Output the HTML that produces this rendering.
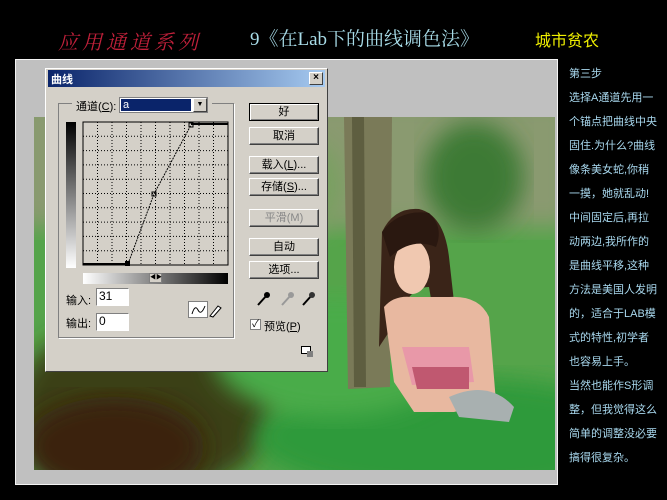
<!DOCTYPE html>
<html><head><meta charset="utf-8"><style>
*{margin:0;padding:0;box-sizing:border-box}
body{width:667px;height:500px;background:#000;position:relative;overflow:hidden;font-family:"Liberation Sans","Noto Sans CJK SC",sans-serif}
.a{position:absolute}
.t{font-family:"Liberation Serif","Noto Serif CJK SC",serif}
.btn{position:absolute;left:249px;width:70px;height:18px;background:#d4d0c8;border:1px solid;border-color:#fff #404040 #404040 #fff;box-shadow:inset -1px -1px 0 #808080;font-size:11px;text-align:center;line-height:16px;color:#000}
.side{position:absolute;left:569px;font-size:11px;color:#a8d8ee;white-space:nowrap}
</style></head><body>
<div class="a t" style="left:58px;top:26px;font-size:20px;color:#c0203a;font-style:italic;letter-spacing:4px">应用通道系列</div>
<div class="a t" style="left:250px;top:24px;font-size:19px;color:#a8dce8">9《在Lab下的曲线调色法》</div>
<div class="a" style="left:535px;top:27px;font-size:16px;color:#f0f000">城市贫农</div>

<div class="a" style="left:15px;top:59px;width:543px;height:426px;background:#c0c0c0;border:1px solid #f4f4f4"></div>
<div class="a" style="left:34px;top:117px;width:521px;height:353px;overflow:hidden;background:#5aa050">
<svg width="521" height="353" style="position:absolute;left:0;top:0">
<defs><filter id="b"><feGaussianBlur stdDeviation="12"/></filter></defs>
<rect x="0" y="0" width="521" height="353" fill="#55a44a"/>
<rect x="-20" y="-20" width="560" height="130" fill="#8a9a70" filter="url(#b)"/>
<ellipse cx="440" cy="60" rx="50" ry="55" fill="#3e7a34" filter="url(#b)"/>
<ellipse cx="260" cy="70" rx="50" ry="50" fill="#78a060" filter="url(#b)"/>
<ellipse cx="110" cy="290" rx="130" ry="90" fill="#3a4018" filter="url(#b)"/>
<ellipse cx="80" cy="330" rx="90" ry="50" fill="#3a2010" filter="url(#b)"/>
<ellipse cx="420" cy="320" rx="200" ry="60" fill="#2e9a3a" filter="url(#b)"/>
<ellipse cx="300" cy="240" rx="120" ry="60" fill="#4aac4a" filter="url(#b)"/>
<path d="M310 0 L358 0 L356 270 L314 272 Z" fill="#7a7a58"/>
<path d="M318 0 L330 0 L332 270 L320 270 Z" fill="#5e5e40"/>
<path d="M348 115 Q360 90 385 92 Q410 98 415 140 L425 230 L405 230 L395 170 Q375 170 365 200 L345 230 Z" fill="#3a2418"/>
<ellipse cx="378" cy="150" rx="18" ry="27" fill="#f0c8b0"/>
<path d="M350 190 Q360 178 378 180 L415 180 Q445 178 455 200 L462 285 L420 295 L380 295 L360 265 Z" fill="#e8b8a0"/>
<path d="M368 230 L435 230 L440 265 L378 268 Z" fill="#e898a8"/>
<path d="M378 250 L435 250 L435 272 L383 272 Z" fill="#c05870"/>
<path d="M415 280 Q455 262 480 290 L475 305 L425 300 Z" fill="#a8b0b0"/>
<path d="M348 115 Q365 92 395 96 Q410 110 402 130 Q378 120 356 140 Z" fill="#2a1810"/>
</svg>
</div>

<div class="a" style="left:45px;top:68px;width:283px;height:304px;background:#d4d0c8;border:1px solid;border-color:#fff #404040 #404040 #fff">
<div class="a" style="left:2px;top:1px;width:277px;height:17px;background:linear-gradient(90deg,#0a246a,#a6caf0)"><span style="color:#fff;font-size:11px;font-weight:bold;position:absolute;left:3px;top:1px">曲线</span>
<div class="a" style="right:2px;top:2px;width:14px;height:13px;background:#d4d0c8;border:1px solid;border-color:#fff #404040 #404040 #fff;font-size:10px;line-height:10px;text-align:center;font-weight:bold">×</div></div>
</div>
<div class="a" style="left:58px;top:103px;width:176px;height:235px;border:1px solid #808080;box-shadow:1px 1px 0 #fff"></div>
<div class="a" style="left:72px;top:97px;width:140px;height:16px;background:#d4d0c8"></div>
<div class="a" style="left:76px;top:98px;font-size:11px">通道(<u>C</u>):</div>
<div class="a" style="left:119px;top:97px;width:89px;height:16px;background:#fff;border:1px solid #808080"><div class="a" style="left:1px;top:1px;width:70px;height:12px;background:#0a246a;color:#fff;font-size:11px;line-height:12px;padding-left:2px">a</div><div class="a" style="right:0;top:0;width:14px;height:14px;background:#d4d0c8;border:1px solid;border-color:#fff #404040 #404040 #fff;font-size:7px;text-align:center;line-height:12px">▼</div></div>
<div class="a" style="left:66px;top:122px;width:10px;height:146px;background:linear-gradient(#000,#fff)"></div>
<svg class="a" style="left:82px;top:121px" width="148" height="146">
<rect x="1" y="1" width="145" height="143" fill="#d4d0c8" stroke="#000"/>
<g stroke="#000" stroke-dasharray="1,2" stroke-width="1">
<path d="M15.5 1V144M30 1V144M44.5 1V144M59 1V144M73.5 1V144M88 1V144M102.5 1V144M117 1V144M131.5 1V144"/>
<path d="M1 15.3H146M1 29.6H146M1 43.9H146M1 58.2H146M1 72.5H146M1 86.8H146M1 101.1H146M1 115.4H146M1 129.7H146"/>
</g>
<path d="M46 143 L72 73 L109 4" stroke="#000" stroke-dasharray="2,1" fill="none"/>
<path d="M1 143H46M109 3H146" stroke="#000" stroke-width="2"/>
<rect x="43" y="140" width="5" height="5" fill="#000"/><rect x="70" y="71" width="4" height="4" fill="none" stroke="#000"/><rect x="107" y="2" width="4" height="4" fill="none" stroke="#000"/>
</svg>
<div class="a" style="left:83px;top:273px;width:145px;height:11px;background:linear-gradient(90deg,#fff,#000)"></div>
<div class="a" style="left:149px;top:273px;width:13px;height:10px;background:#d4d0c8;border:1px solid #808080;font-size:6px;line-height:8px;text-align:center">◀▶</div>
<div class="a" style="left:66px;top:292px;font-size:11px">输入:</div>
<div class="a" style="left:96px;top:288px;width:33px;height:18px;background:#fff;border:1px solid;border-color:#808080 #fff #fff #808080;font-size:12px;padding-left:2px">31</div>
<div class="a" style="left:66px;top:315px;font-size:11px">输出:</div>
<div class="a" style="left:96px;top:313px;width:33px;height:18px;background:#fff;border:1px solid;border-color:#808080 #fff #fff #808080;font-size:12px;padding-left:2px">0</div>
<svg class="a" style="left:188px;top:301px" width="40" height="18"><rect x="0.5" y="0.5" width="19" height="16" fill="#fff" stroke="#808080"/><path d="M4 13 Q7 3 10 9 T17 5" stroke="#000" fill="none"/><path d="M22 15 L30 5 L33 7 L25 16 Z" fill="#fff" stroke="#000"/></svg>
<div class="btn" style="top:103px;border:1px solid #000;box-shadow:inset 1px 1px 0 #fff,inset -1px -1px 0 #808080">好</div>
<div class="btn" style="top:127px">取消</div>
<div class="btn" style="top:156px">载入(<u>L</u>)...</div>
<div class="btn" style="top:178px">存储(<u>S</u>)...</div>
<div class="btn" style="top:209px;color:#888">平滑(M)</div>
<div class="btn" style="top:238px">自动</div>
<div class="btn" style="top:261px">选项...</div>
<svg class="a" style="left:255px;top:290px" width="60" height="18"><g stroke="#000" stroke-width="2"><path d="M3 15 L12 5"/><path d="M27 15 L36 5" stroke="#999"/><path d="M48 15 L57 5"/></g><circle cx="12" cy="5" r="3" fill="#000"/><circle cx="36" cy="5" r="3" fill="#999"/><circle cx="57" cy="5" r="3" fill="#333"/></svg>
<div class="a" style="left:250px;top:319px;width:11px;height:11px;background:#fff;border:1px solid #808080;font-size:10px;line-height:9px;text-align:center">✓</div>
<div class="a" style="left:264px;top:318px;font-size:11px">预览(<u>P</u>)</div>
<div class="a" style="left:301px;top:346px;width:10px;height:8px;border:1px solid #000;background:#fff"></div>
<div class="a" style="left:307px;top:351px;width:6px;height:6px;background:#808080"></div>

<div class="side" style="top:65px">第三步</div>
<div class="side" style="top:89px">选择A通道先用一</div>
<div class="side" style="top:113px">个锚点把曲线中央</div>
<div class="side" style="top:137px">固住.为什么?曲线</div>
<div class="side" style="top:161px">像条美女蛇,你稍</div>
<div class="side" style="top:185px">一摸，她就乱动!</div>
<div class="side" style="top:209px">中间固定后,再拉</div>
<div class="side" style="top:233px">动两边,我所作的</div>
<div class="side" style="top:257px">是曲线平移,这种</div>
<div class="side" style="top:281px">方法是美国人发明</div>
<div class="side" style="top:305px">的，适合于LAB模</div>
<div class="side" style="top:329px">式的特性,初学者</div>
<div class="side" style="top:353px">也容易上手。</div>
<div class="side" style="top:377px">当然也能作S形调</div>
<div class="side" style="top:401px">整，但我觉得这么</div>
<div class="side" style="top:425px">简单的调整没必要</div>
<div class="side" style="top:449px">搞得很复杂。</div>
</body></html>
